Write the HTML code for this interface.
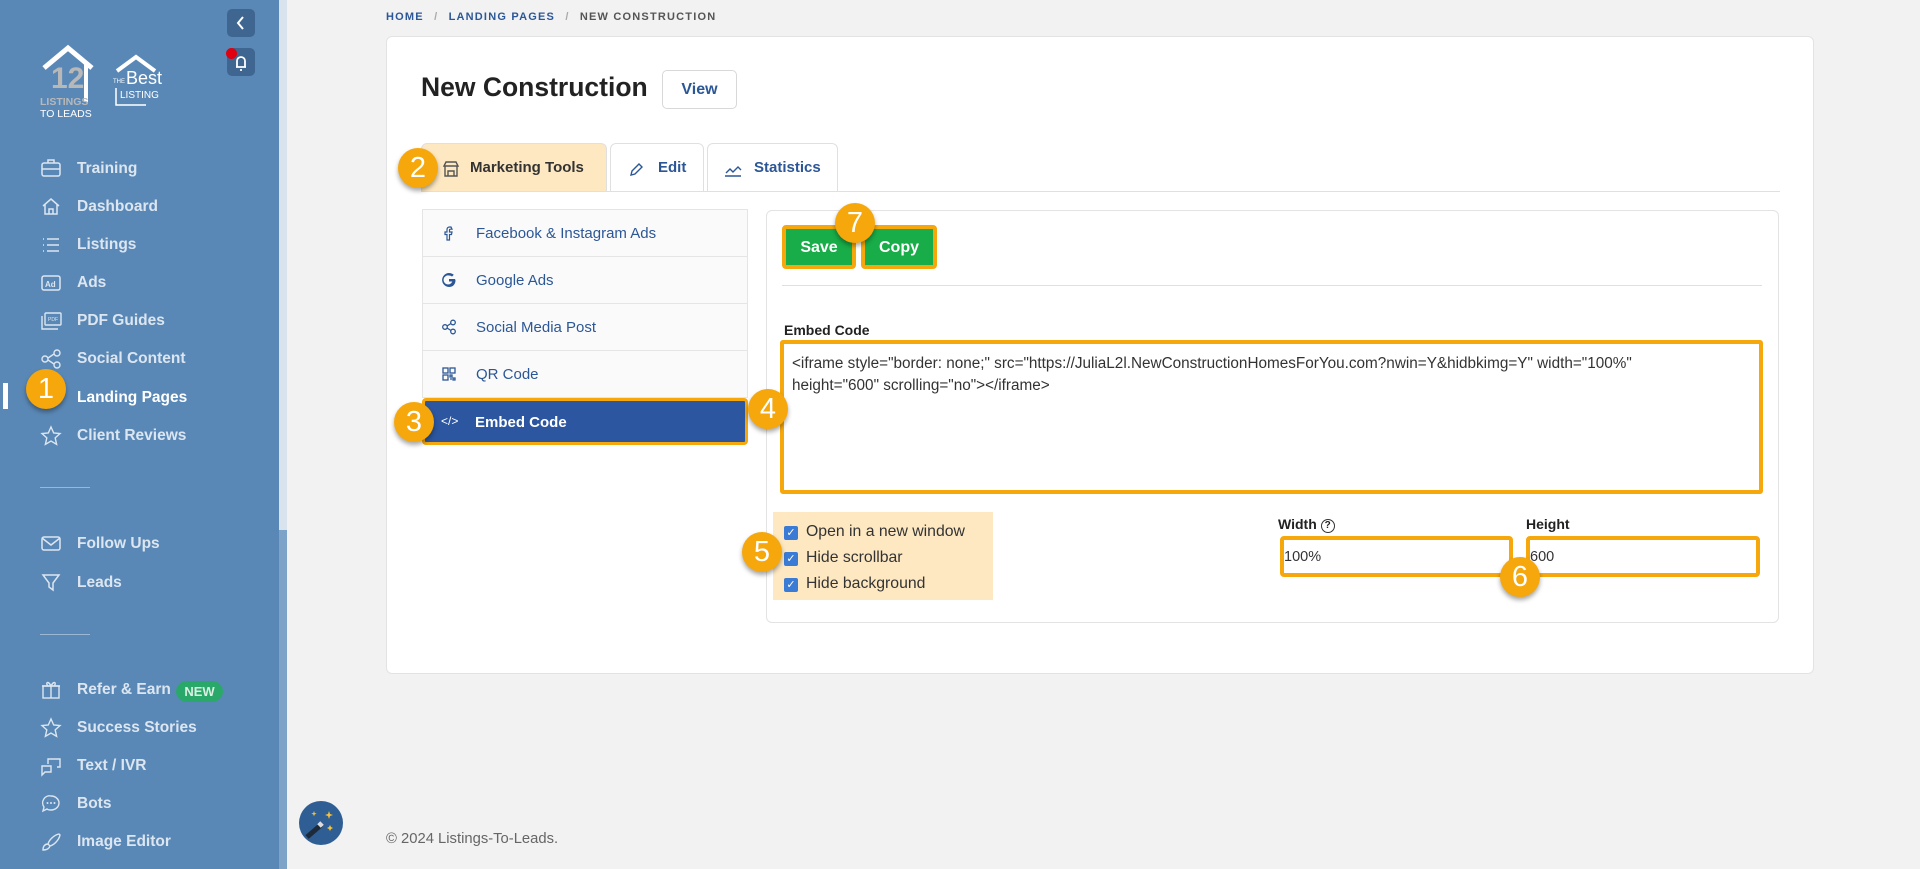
<!DOCTYPE html>
<html><head><meta charset="utf-8"><style>
*{box-sizing:border-box;margin:0;padding:0}
body{width:1920px;height:869px;background:#f2f2f2;font-family:"Liberation Sans",sans-serif;position:relative;overflow:hidden}
.abs{position:absolute}
#sb{left:0;top:0;width:279px;height:869px;background:#5a88b6}
#scr{left:279px;top:0;width:8px;height:869px;background:#7ea3c8}
#thumb{left:279px;top:0;width:8px;height:530px;background:#d8e3ee}
.nav{position:absolute;left:77px;font-size:15.5px;font-weight:bold;color:#dce6f1;line-height:20px}
.ic{position:absolute;left:40px;width:22px;height:22px}
.sep{position:absolute;left:40px;width:50px;height:1px;background:#9bb7d4}
.badge{position:absolute;width:40px;height:40px;border-radius:50%;background:#f5a70c;color:#fff;font-size:29px;text-align:center;line-height:40px;box-shadow:0 3px 5px rgba(0,0,0,.35)}
.crumb{font-size:11px;font-weight:bold;letter-spacing:1.2px;color:#2c5796}
.card{left:386px;top:36px;width:1428px;height:638px;background:#fff;border:1px solid #e3e3e3;border-radius:6px}
.tab{top:143px;height:48px;border:1px solid #e0e0e0;border-bottom:none;border-radius:6px 6px 0 0;font-size:15px;font-weight:bold;color:#2c5796;line-height:48px}
.li{left:422px;width:326px;height:47px;border:1px solid #e5e5e5;border-top:none;background:#fafafa;font-size:15px;color:#2c5796;line-height:48px;padding-left:53px}
.li svg{position:absolute;left:18px;top:15px}
.chk{position:absolute;left:784px;width:14px;height:14px;background:#3a7bd5;border-radius:2px;color:#fff;font-size:11px;line-height:14px;text-align:center}
.cl{position:absolute;left:806px;font-size:15.8px;color:#333}
</style></head><body>
<div id="sb" class="abs"></div><div id="scr" class="abs"></div><div id="thumb" class="abs"></div>
<div class="abs" style="left:227px;top:9px;width:28px;height:28px;background:#3f6690;border-radius:5px"><svg width="28" height="28"><path d="M16 8l-5 6 5 6" stroke="#fff" stroke-width="2" fill="none"/></svg></div>
<div class="abs" style="left:227px;top:48px;width:28px;height:28px;background:#3f6690;border-radius:5px"><svg width="28" height="28"><path d="M9 19h10M10 19v-6a4 4 0 018 0v6M13 22h2" stroke="#fff" stroke-width="1.8" fill="none"/></svg></div>
<div class="abs" style="left:226px;top:48px;width:11px;height:11px;background:#e0000f;border-radius:50%"></div>
<svg class="abs" style="left:40px;top:44px" width="140" height="75">
<path d="M4 24L28 4 52 24" stroke="#fff" stroke-width="5" fill="none"/><path d="M46 20v38" stroke="#fff" stroke-width="4"/><text x="11" y="44" font-size="30" font-weight="bold" fill="#b8b8b8" font-family="Liberation Sans">12</text>
<text x="0" y="61" font-size="10.5" font-weight="bold" fill="#b8b8b8" font-family="Liberation Sans">LISTINGS</text>
<text x="0" y="73" font-size="10.5" fill="#fff" font-family="Liberation Sans">TO LEADS</text>
<path d="M77 27l19-14 19 14" stroke="#fff" stroke-width="4" fill="none"/>
<text x="73" y="39" font-size="6" fill="#fff">THE</text><text x="86" y="40" font-size="18" fill="#fff" font-family="Liberation Sans">Best</text>
<path d="M76 44v17h30" stroke="#fff" stroke-width="1.5" fill="none"/><text x="80" y="54" font-size="10" fill="#fff">LISTING</text>
</svg>
<div class="abs" style="left:3px;top:383px;width:5px;height:26px;background:#fff"></div>
<svg class="ic" style="top:157px" viewBox="0 0 22 22"><rect x="2" y="6" width="18" height="13" rx="2" stroke="#dce6f1" stroke-width="1.5" fill="none"/><path d="M8 6V3h6v3M2 12h18" stroke="#dce6f1" stroke-width="1.5" fill="none"/></svg><div class="nav" style="top:159px">Training</div>
<svg class="ic" style="top:195px" viewBox="0 0 22 22"><path d="M3 11l8-7 8 7M5 9v10h12V9M9 19v-5h4v5" stroke="#dce6f1" stroke-width="1.5" fill="none"/></svg><div class="nav" style="top:197px">Dashboard</div>
<svg class="ic" style="top:234px" viewBox="0 0 22 22"><path d="M3 5h1M3 11h1M3 17h1M7 5h12M7 11h12M7 17h12" stroke="#dce6f1" stroke-width="1.5"/></svg><div class="nav" style="top:235px">Listings</div>
<svg class="ic" style="top:272px" viewBox="0 0 22 22"><rect x="2" y="4" width="18" height="14" rx="2" stroke="#dce6f1" stroke-width="1.5" fill="none"/><text x="5" y="15" font-size="8" font-weight="bold" fill="#dce6f1">Ad</text></svg><div class="nav" style="top:273px">Ads</div>
<svg class="ic" style="top:310px" viewBox="0 0 22 22"><rect x="5" y="3" width="16" height="12" rx="1" stroke="#dce6f1" stroke-width="1.4" fill="none"/><path d="M2 6v13h16" stroke="#dce6f1" stroke-width="1.4" fill="none"/><text x="8" y="11" font-size="5" fill="#dce6f1">PDF</text></svg><div class="nav" style="top:311px">PDF Guides</div>
<svg class="ic" style="top:348px" viewBox="0 0 22 22"><circle cx="5" cy="11" r="3" stroke="#dce6f1" stroke-width="1.4" fill="none"/><circle cx="17" cy="5" r="3" stroke="#dce6f1" stroke-width="1.4" fill="none"/><circle cx="17" cy="17" r="3" stroke="#dce6f1" stroke-width="1.4" fill="none"/><path d="M8 10l6-4M8 12l6 4" stroke="#dce6f1" stroke-width="1.4"/></svg><div class="nav" style="top:349px">Social Content</div>
<div class="nav" style="top:388px;color:#fff">Landing Pages</div>
<svg class="ic" style="top:425px" viewBox="0 0 22 22"><path d="M11 2l2.7 6 6.3.6-4.8 4.3 1.4 6.4L11 16l-5.6 3.3 1.4-6.4L2 8.6 8.3 8z" stroke="#dce6f1" stroke-width="1.4" fill="none"/></svg><div class="nav" style="top:426px">Client Reviews</div>
<div class="sep" style="top:487px"></div>
<svg class="ic" style="top:532px" viewBox="0 0 22 22"><rect x="2" y="5" width="18" height="13" rx="2" stroke="#dce6f1" stroke-width="1.5" fill="none"/><path d="M2 6l9 7 9-7" stroke="#dce6f1" stroke-width="1.5" fill="none"/></svg><div class="nav" style="top:534px">Follow Ups</div>
<svg class="ic" style="top:571px" viewBox="0 0 22 22"><path d="M3 4h16l-6 8v7l-4-3v-4z" stroke="#dce6f1" stroke-width="1.5" fill="none"/></svg><div class="nav" style="top:573px">Leads</div>
<div class="sep" style="top:634px"></div>
<svg class="ic" style="top:678px" viewBox="0 0 22 22"><rect x="3" y="8" width="16" height="12" stroke="#dce6f1" stroke-width="1.4" fill="none"/><path d="M2 8h18M11 8v12M11 8C8 2 5 5 8 8M11 8c3-6 6-3 3 0" stroke="#dce6f1" stroke-width="1.4" fill="none"/></svg><div class="nav" style="top:680px">Refer &amp; Earn</div>
<div class="abs" style="left:176px;top:681px;width:47px;height:21px;border-radius:11px;background:#2aa86a;color:#d9f0e3;font-size:13px;font-weight:bold;text-align:center;line-height:21px">NEW</div>
<svg class="ic" style="top:717px" viewBox="0 0 22 22"><path d="M11 2l2.7 6 6.3.6-4.8 4.3 1.4 6.4L11 16l-5.6 3.3 1.4-6.4L2 8.6 8.3 8z" stroke="#dce6f1" stroke-width="1.4" fill="none"/></svg><div class="nav" style="top:718px">Success Stories</div>
<svg class="ic" style="top:755px" viewBox="0 0 22 22"><path d="M2 20v-9h9v6H5zM8 9V4h12v8h-3" stroke="#dce6f1" stroke-width="1.4" fill="none"/></svg><div class="nav" style="top:756px">Text / IVR</div>
<svg class="ic" style="top:793px" viewBox="0 0 22 22"><path d="M11 3a8 7 0 110 14c-2 0-3 0-4-1l-4 2 1-4a7 7 0 017-11z" stroke="#dce6f1" stroke-width="1.4" fill="none"/><circle cx="7.5" cy="10" r="1" fill="#dce6f1"/><circle cx="11" cy="10" r="1" fill="#dce6f1"/><circle cx="14.5" cy="10" r="1" fill="#dce6f1"/></svg><div class="nav" style="top:794px">Bots</div>
<svg class="ic" style="top:831px" viewBox="0 0 22 22"><path d="M19 3c-5 1-10 6-11 10l2 2c4-1 9-6 10-11zM8 13c-3 0-5 2-5 6 3 0 6-1 7-4" stroke="#dce6f1" stroke-width="1.4" fill="none"/></svg><div class="nav" style="top:832px">Image Editor</div>
<div class="badge" style="left:26px;top:369px">1</div>
<div class="abs" style="left:299px;top:801px;width:44px;height:44px;border-radius:50%;background:#2f5e95"><svg width="44" height="44"><path d="M8 36l14-12" stroke="#1d2a3a" stroke-width="5"/><path d="M20 25l3-3" stroke="#ddd" stroke-width="5"/><path d="M30 10l1 3 3 1-3 1-1 3-1-3-3-1 3-1z M31 24l1 2 2 1-2 1-1 2-1-2-2-1 2-1z M15 10l.7 2 2 .7-2 .7-.7 2-.7-2-2-.7 2-.7z" fill="#f5c23a"/></svg></div>
<div class="abs crumb" style="left:386px;top:11px">HOME <span style="color:#aaa;margin:0 6px">/</span> LANDING PAGES <span style="color:#aaa;margin:0 6px">/</span> <span style="color:#555">NEW CONSTRUCTION</span></div>
<div class="abs card"></div>
<div class="abs" style="left:421px;top:72px;font-size:26.5px;font-weight:bold;color:#222">New Construction</div>
<div class="abs" style="left:662px;top:70px;width:75px;height:39px;border:1px solid #d8d8d8;border-radius:5px;font-size:16px;font-weight:bold;color:#2c5796;text-align:center;line-height:37px">View</div>
<div class="abs" style="left:421px;top:191px;width:1359px;height:1px;background:#e0e0e0"></div>
<div class="abs tab" style="left:421px;width:186px;background:#fde8c2;color:#333;padding-left:48px">Marketing Tools</div>
<svg class="abs" style="left:442px;top:160px" width="18" height="18"><path d="M2 6l2-4h10l2 4zM3 6v10h12V6M6 16v-5h6v5M2 6h14" stroke="#555" stroke-width="1.4" fill="none"/></svg>
<div class="abs tab" style="left:610px;width:94px;padding-left:47px">Edit</div>
<svg class="abs" style="left:628px;top:162px" width="16" height="16"><path d="M3 13l1-4 7-7 3 3-7 7z" stroke="#2c5796" stroke-width="1.4" fill="none"/></svg>
<div class="abs tab" style="left:707px;width:131px;padding-left:46px">Statistics</div>
<svg class="abs" style="left:724px;top:162px" width="18" height="16"><path d="M1 14h16M2 11l4-4 3 3 5-5 3 3" stroke="#2c5796" stroke-width="1.4" fill="none"/></svg>
<div class="abs" style="left:422px;top:209px;width:326px;height:1px;background:#e5e5e5"></div>
<div class="abs li" style="top:210px"><svg width="16" height="16"><path d="M10 2H8.5C7 2 6 3 6 4.5V7H4v2.5h2V15h2.5V9.5h2l.5-2.5H8.5V5c0-.5.3-.8.8-.8H11z" stroke="#2c5796" stroke-width="1.2" fill="none"/></svg>Facebook &amp; Instagram Ads</div>
<div class="abs li" style="top:257px"><svg width="16" height="16"><path d="M14 7H8v2.5h3.3A4.5 4.5 0 118 3.5c1.2 0 2.2.4 3 1.1l1.8-1.8A7 7 0 108 15c4 0 6.5-2.8 6.5-6.8z" fill="#2c5796"/></svg>Google Ads</div>
<div class="abs li" style="top:304px"><svg width="16" height="16"><circle cx="4" cy="8" r="2.3" stroke="#2c5796" stroke-width="1.3" fill="none"/><circle cx="12" cy="3.5" r="2.3" stroke="#2c5796" stroke-width="1.3" fill="none"/><circle cx="12" cy="12.5" r="2.3" stroke="#2c5796" stroke-width="1.3" fill="none"/><path d="M6 7l4-2.5M6 9l4 2.5" stroke="#2c5796" stroke-width="1.3"/></svg>Social Media Post</div>
<div class="abs li" style="top:351px"><svg width="16" height="16"><rect x="2" y="2" width="5" height="5" stroke="#2c5796" stroke-width="1.3" fill="none"/><rect x="9" y="2" width="5" height="5" stroke="#2c5796" stroke-width="1.3" fill="none"/><rect x="2" y="9" width="5" height="5" stroke="#2c5796" stroke-width="1.3" fill="none"/><path d="M9 9h2v2H9zM12 12h2v2h-2zM9 13h2" stroke="#2c5796" stroke-width="1.3" fill="none"/></svg>QR Code</div>
<div class="abs" style="left:422px;top:398px;width:326px;height:47px;background:#2c56a0;border:3px solid #f5a70c;border-radius:4px;color:#fff;font-size:15px;font-weight:bold;line-height:43px;padding-left:50px">Embed Code</div>
<div class="abs" style="left:441px;top:414px;color:#fff;font-size:12px">&lt;/&gt;</div>
<div class="abs" style="left:766px;top:210px;width:1013px;height:413px;border:1px solid #e3e3e3;border-radius:6px"></div>
<div class="abs" style="left:782px;top:225px;width:74px;height:44px;background:#18ad48;border:4px solid #f5a70c;border-radius:4px;color:#fff;font-weight:bold;font-size:16px;text-align:center;line-height:38px">Save</div>
<div class="abs" style="left:861px;top:225px;width:76px;height:44px;background:#18ad48;border:4px solid #f5a70c;border-radius:4px;color:#fff;font-weight:bold;font-size:16px;text-align:center;line-height:38px">Copy</div>
<div class="abs" style="left:782px;top:285px;width:980px;height:1px;background:#e0e0e0"></div>
<div class="abs" style="left:784px;top:322px;font-size:14px;font-weight:bold;color:#222">Embed Code</div>
<div class="abs" style="left:780px;top:340px;width:983px;height:154px;border:4px solid #f5a70c;border-radius:3px;padding:9px 8px;font-size:15.3px;line-height:22px;color:#333">&lt;iframe style="border: none;" src="https://JuliaL2l.NewConstructionHomesForYou.com?nwin=Y&amp;hidbkimg=Y" width="100%"<br>height="600" scrolling="no"&gt;&lt;/iframe&gt;</div>
<div class="abs" style="left:773px;top:512px;width:220px;height:88px;background:#fde8c2"></div>
<div class="chk" style="top:526px">✓</div><div class="cl" style="top:523px">Open in a new window</div>
<div class="chk" style="top:552px">✓</div><div class="cl" style="top:549px">Hide scrollbar</div>
<div class="chk" style="top:578px">✓</div><div class="cl" style="top:575px">Hide background</div>
<div class="abs" style="left:1278px;top:516px;font-size:14px;font-weight:bold;color:#222">Width <span style="display:inline-block;width:14px;height:14px;border:1.3px solid #333;border-radius:50%;font-size:10px;text-align:center;line-height:12px;vertical-align:1px">?</span></div>
<div class="abs" style="left:1526px;top:516px;font-size:14px;font-weight:bold;color:#222">Height</div>
<div class="abs" style="left:1280px;top:536px;width:233px;height:41px;border:4px solid #f5a70c;border-radius:4px;font-size:14.5px;line-height:35px;color:#333">100%</div>
<div class="abs" style="left:1526px;top:536px;width:234px;height:41px;border:4px solid #f5a70c;border-radius:4px;font-size:14.5px;line-height:35px;color:#333">600</div>
<div class="badge" style="left:398px;top:148px">2</div>
<div class="badge" style="left:394px;top:402px">3</div>
<div class="badge" style="left:748px;top:389px">4</div>
<div class="badge" style="left:742px;top:532px">5</div>
<div class="badge" style="left:1500px;top:557px">6</div>
<div class="badge" style="left:835px;top:203px">7</div>
<div class="abs" style="left:386px;top:831px;font-size:14.8px;color:#666">© 2024 Listings-To-Leads.</div>
</body></html>
